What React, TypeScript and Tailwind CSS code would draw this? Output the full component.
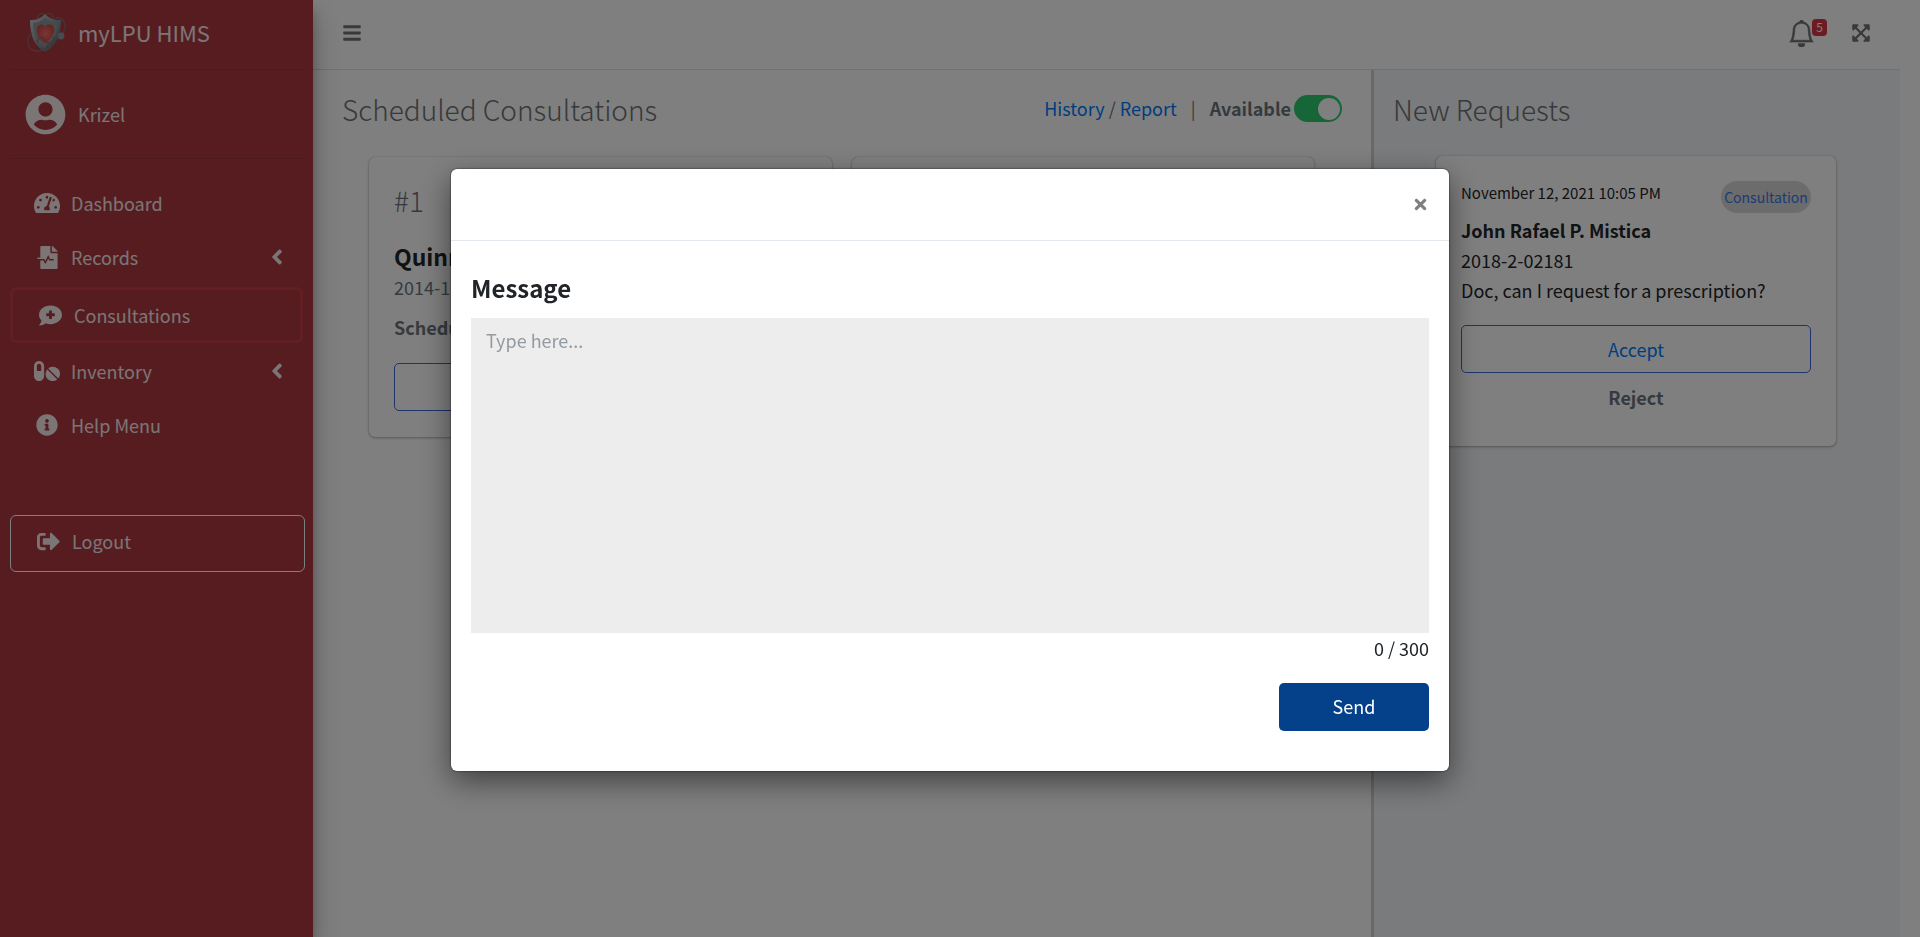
import { useState } from 'react';
import type { ReactNode } from 'react';
import {
  FaAngleLeft,
  FaBars,
  FaCommentMedical,
  FaExpandArrowsAlt,
  FaFileMedicalAlt,
  FaInfoCircle,
  FaPills,
  FaSignOutAlt,
  FaTachometerAlt,
  FaTimes,
  FaUserCircle,
} from 'react-icons/fa';
import { BsBell } from 'react-icons/bs';

function Logo() {
  return (
    <svg viewBox="0 0 42 42" className="h-[42px] w-[42px] shrink-0" aria-hidden="true">
      <defs>
        <linearGradient id="shield" x1="0" y1="0" x2="1" y2="1">
          <stop offset="0" stopColor="#c9d0d3" />
          <stop offset="0.5" stopColor="#8e989d" />
          <stop offset="1" stopColor="#4e5a60" />
        </linearGradient>
        <radialGradient id="heart" cx="0.5" cy="0.5" r="0.6">
          <stop offset="0" stopColor="#f0716b" />
          <stop offset="1" stopColor="#c8403c" />
        </radialGradient>
      </defs>
      <g fill="none" stroke="#8d6a70" strokeWidth="1.2">
        <path d="M12 7C11 2 16 0 20 3c3-3 8-1 7 3" />
        <path d="M29 6c8-2 14 8 7 16" />
      </g>
      <path d="M19 2c4 4 9 6 16 6 0 14-3 25-16 32C7 33 4 22 4 8c7 0 11-2 15-6z" fill="url(#shield)" />
      <path d="M19 6c4 3 8 5 13 5-1 11-4 19-13 25C10 30 8 22 7 11c5 0 8-2 12-5z" fill="#8f9498" />
      <path d="M19 31c-6-4-8-8-8-13 0-6 6-7 8-3 2-4 9-3 9 3 0 5-3 9-9 13z" fill="url(#heart)" />
      <g fill="none" stroke="#94656a" strokeWidth="1.3">
        <path d="M6 21c-6 5-6 16 3 18 8 1 13-4 14-9" />
        <path d="M11 31c0-6 6-7 8-3s8 4 9-3" />
      </g>
      <circle cx="35" cy="24" r="3.4" fill="#8798a4" />
    </svg>
  );
}

interface NavItemProps {
  icon: ReactNode;
  label: string;
  active?: boolean;
  expandable?: boolean;
}

function NavItem({ icon, label, active, expandable }: NavItemProps) {
  return (
    <a
      href="#"
      className={
        active
          ? 'mt-[3px] mb-px flex h-14 items-center rounded-md border-3 border-[#c23e48] px-[21px]'
          : 'flex h-[54px] items-center pr-3.5 pl-[21px]'
      }
    >
      <span className="flex w-8 justify-center">{icon}</span>
      <span className="ml-2 flex-1">{label}</span>
      {expandable && <FaAngleLeft className="size-6" />}
    </a>
  );
}

function Sidebar() {
  return (
    <aside className="z-10 flex w-[313px] shrink-0 flex-col bg-[#ac3841] px-2.5 text-[18px] text-white/90 shadow-[0_14px_28px_rgba(0,0,0,0.25),0_10px_10px_rgba(0,0,0,0.22)]">
      <a href="#" className="flex h-[70px] items-center border-b border-[#9c323b] pl-4 pb-1 text-[22px]">
        <Logo />
        <span className="ml-2.5">myLPU HIMS</span>
      </a>
      <a href="#" className="flex h-[89px] items-center border-b border-[#9c323b] pl-[15px]">
        <FaUserCircle className="size-[41px]" />
        <span className="ml-3">Krizel</span>
      </a>
      <nav className="mt-[17px] flex flex-col">
        <NavItem icon={<FaTachometerAlt className="size-[26px]" />} label="Dashboard" />
        <NavItem icon={<FaFileMedicalAlt className="size-[23px]" />} label="Records" expandable />
        <NavItem icon={<FaCommentMedical className="size-[23px]" />} label="Consultations" active />
        <NavItem icon={<FaPills className="size-[26px]" />} label="Inventory" expandable />
        <NavItem icon={<FaInfoCircle className="size-[22px]" />} label="Help Menu" />
      </nav>
      <a href="#" className="mt-[63px] -mr-0.5 flex h-[57px] items-center rounded-md border border-white pb-1 pl-[21px]">
        <span className="flex w-8 justify-center">
          <FaSignOutAlt className="size-[23px]" />
        </span>
        <span className="ml-2">Logout</span>
      </a>
    </aside>
  );
}

function TopBar() {
  return (
    <header className="flex h-[70px] items-center border-b border-[#dee2e6] pr-[29px] pb-[3px] pl-[29px] text-[#6f7275]">
      <button type="button" aria-label="Toggle menu">
        <FaBars className="size-5" />
      </button>
      <button type="button" aria-label="Notifications" className="relative ml-auto">
        <BsBell className="size-[27px]" stroke="currentColor" strokeWidth="0.4" />
        <span className="absolute -top-px left-6 flex h-[17px] w-[15px] items-center justify-center rounded bg-[#dc3545] text-[12px] leading-none text-white">
          5
        </span>
      </button>
      <button type="button" aria-label="Full screen" className="ml-9">
        <FaExpandArrowsAlt className="size-5" />
      </button>
    </header>
  );
}

const cardClass =
  'rounded-md bg-white px-[25px] shadow-[0_0_1px_rgba(0,0,0,0.3),0_1px_3px_rgba(0,0,0,0.3)]';
const outlineButton =
  'h-12 w-full rounded-[5px] border border-[#3b68d8] text-[18px] text-[#007bff]';

function ScheduledPanel() {
  const [available, setAvailable] = useState(true);
  return (
    <section className="flex-1">
      <div className="flex h-[87px] items-center pr-[29px] pb-2.5 pl-[29px]">
        <h1 className="text-[28px] font-light text-[#6f7275]">Scheduled Consultations</h1>
        <div className="ml-auto flex items-center text-[18px] text-[#6c757d]">
          <span className="whitespace-pre">
            <a href="#" className="text-[#007bff]">History</a> / <a href="#" className="text-[#007bff]">Report</a>
          </span>
          <span className="mx-3.5">|</span>
          <label htmlFor="available" className="font-bold">Available</label>
          <input
            id="available"
            type="checkbox"
            role="switch"
            checked={available}
            onChange={(e) => setAvailable(e.target.checked)}
            className="ml-[3px] flex h-[27px] w-12 appearance-none items-center rounded-full bg-[#ccc] px-0.5 before:size-[22px] before:rounded-full before:bg-white checked:justify-end checked:bg-[#2ecc71]"
          />
        </div>
      </div>
      <div className="grid grid-cols-2 gap-5 pr-[57px] pl-14">
        <article className={cardClass + ' h-[280px] pt-[23px]'}>
          <p className="text-[28px] leading-[40px] font-light text-[#6c757d]">#1</p>
          <h2 className="mt-5 text-[23px] leading-8 font-bold text-[#212529]">Quinn</h2>
          <p className="text-[18px] leading-[30px] text-[#6c757d]">2014-1</p>
          <p className="mt-2.5 text-[18px] leading-[30px] font-bold text-[#6c757d]">Schedule</p>
          <button type="button" className={outlineButton + ' mt-[21px]'}>View</button>
        </article>
        <article className={cardClass + ' h-[280px]'} />
      </div>
    </section>
  );
}

function RequestsPanel() {
  return (
    <section className="w-1/3 border-l-3 border-[#ced2d6] bg-[#f4f6f9] pr-0.5">
      <div className="flex h-[86px] items-center pb-[9px] pl-[19px]">
        <h1 className="text-[28px] font-light text-[#6f7275]">New Requests</h1>
      </div>
      <article className={cardClass + ' mx-auto h-[290px] w-[400px] pt-[25px] text-[18px] leading-[30px] text-[#212529]'}>
        <div className="flex justify-between">
          <p className="text-[15px] leading-6">November 12, 2021 10:05 PM</p>
          <span className="flex h-8 w-[90px] items-center justify-center rounded-full bg-[#d9d9d9] text-[14px] text-[#3478e8]">
            Consultation
          </span>
        </div>
        <h2 className="mt-0.5 font-bold">John Rafael P. Mistica</h2>
        <p>2018-2-02181</p>
        <p>Doc, can I request for a prescription?</p>
        <button type="button" className={outlineButton + ' mt-5'}>Accept</button>
        <button type="button" className="mt-[9px] w-full font-bold text-[#6c757d]">Reject</button>
      </article>
    </section>
  );
}

function MessageDialog() {
  const [message, setMessage] = useState('');
  return (
    <div className="fixed inset-0 z-20 flex items-center justify-center bg-black/50 pt-0.5 pr-5">
      <div
        role="dialog"
        aria-modal="true"
        aria-labelledby="message-label"
        className="w-full max-w-[998px] rounded-md bg-white pb-10 text-[#212529] shadow-[0_10px_30px_rgba(0,0,0,0.5),0_0_2px_rgba(0,0,0,0.8)]"
      >
        <div className="flex h-[72px] items-center justify-end border-b border-[#e2e8ee] pr-5">
          <button type="button" aria-label="Close" className="text-[#7f7f7f]">
            <FaTimes className="size-[17px]" />
          </button>
        </div>
        <form className="flex flex-col px-5 pt-[31px]" onSubmit={(e) => e.preventDefault()}>
          <label id="message-label" htmlFor="message" className="text-[24px] leading-8 font-bold">
            Message
          </label>
          <textarea
            id="message"
            maxLength={300}
            value={message}
            onChange={(e) => setMessage(e.target.value)}
            placeholder="Type here..."
            className="mt-3.5 h-[315px] resize-none bg-[#ededed] px-[15px] py-[7px] text-[18px] leading-[30px] placeholder:text-[#939ba2]"
          />
          <p className="text-right text-[18px] leading-[30px]">{message.length} / 300</p>
          <button type="submit" className="mt-5 h-12 w-[150px] self-end rounded-[5px] bg-[#04418a] text-[18px] text-white">
            Send
          </button>
        </form>
      </div>
    </div>
  );
}

export default function App() {
  return (
    <div className="flex min-h-screen bg-white font-['Source_Sans_Pro','Noto_Sans_CJK_SC',sans-serif]">
      <Sidebar />
      <div className="mr-5 flex flex-1 flex-col">
        <TopBar />
        <main className="flex flex-1">
          <ScheduledPanel />
          <RequestsPanel />
        </main>
      </div>
      <MessageDialog />
    </div>
  );
}
